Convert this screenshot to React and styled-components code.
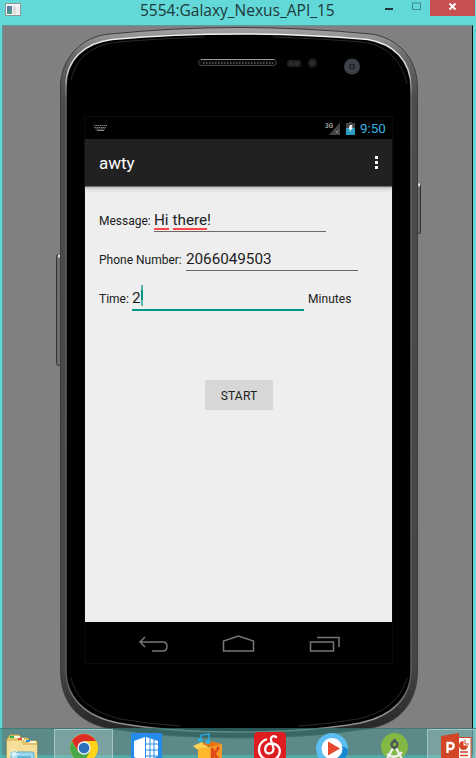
import React from 'react';
import styled, { createGlobalStyle } from 'styled-components';

const GlobalStyle = createGlobalStyle`
  * { box-sizing: border-box; }
  body { margin: 0; overflow: hidden; background: #63d8d8; }
`;

const Desktop = styled.div`
  position: relative;
  width: 476px;
  height: 758px;
  overflow: hidden;
  display: flex;
  flex-direction: column;
  background: #63d8d8;
  font-family: Roboto, "Open Sans", sans-serif;
`;

const TitleBar = styled.header`
  height: 25px;
  flex: none;
  display: grid;
  grid-template-columns: 140px 1fr 142px;
`;

const AppIcon = styled.svg`
  display: block;
  margin: 3px 0 0 5px;
`;

const WindowTitle = styled.h1`
  margin: 0;
  font: 400 15.5px/21px "Open Sans", sans-serif;
  color: #1d3838;
  white-space: nowrap;
`;

const WindowControls = styled.div`
  display: flex;
  justify-content: flex-end;
  padding-right: 2px;
`;

const ControlButton = styled.button`
  width: ${(p) => p.$width}px;
  height: 16px;
  padding: 0;
  border: 0;
  background: ${(p) => (p.$danger ? '#c75050' : 'transparent')};
  svg { display: block; }
`;

const EmulatorStage = styled.main`
  position: relative;
  flex: 1;
  margin: 0 3px 0 2px;
  padding: 91px 0 0 82px;
  background: #808080;
  border: 1px solid #5f9b9b;
  border-right-color: #101010;
  border-bottom: 0;
`;

const PhoneArt = styled.svg`
  position: absolute;
  left: -3px;
  top: -26px;
  pointer-events: none;
`;

const Screen = styled.section`
  position: relative;
  width: 307px;
  height: 546px;
  display: grid;
  grid-template-rows: 22px 47px 1fr 41px;
  background: #000;
  outline: 1px solid #0b0b0b;
`;

const StatusBar = styled.div`
  display: flex;
  align-items: center;
  padding: 0 6px 0 9px;
  background: #000;
  svg { display: block; flex: none; }
`;

const StatusRight = styled.div`
  margin-left: auto;
  display: flex;
  align-items: center;
  gap: 5px;
`;

const Clock = styled.time`
  width: 26px;
  font-size: 13.4px;
  line-height: 22px;
  padding-top: 1px;
  color: #33b5e5;
  white-space: nowrap;
`;

const ActionBar = styled.div`
  position: relative;
  z-index: 1;
  display: flex;
  align-items: center;
  justify-content: space-between;
  padding: 0 14px 0 14px;
  background: #212121;
  box-shadow: 0 1px 0 #777074, 0 2px 0 #c3bdc0, 0 3px 4px rgba(80, 55, 65, 0.25);
`;

const AppName = styled.h2`
  margin: 1px 0 0;
  font-size: 17px;
  line-height: 22px;
  font-weight: 400;
  color: #fff;
`;

const Overflow = styled.button`
  display: grid;
  gap: 2px;
  padding: 0;
  border: 0;
  background: none;
`;

const OverflowDot = styled.span`
  width: 3px;
  height: 3px;
  background: #fff;
`;

const Content = styled.form`
  background: #eee;
  padding: 21px 14px 0;
  display: flex;
  flex-direction: column;
`;

const FieldRow = styled.div`
  display: flex;
  align-items: flex-start;
  height: 39px;
`;

const Label = styled.label`
  width: ${(p) => p.$width}px;
  flex: none;
  padding-top: 6px;
  font-size: 12px;
  line-height: 16px;
  color: #202020;
  white-space: nowrap;
`;

const Unit = styled(Label).attrs({ as: 'span' })`
  padding-left: 4px;
  letter-spacing: 0.05px;
`;

const Field = styled.div`
  width: 172px;
  height: ${(p) => (p.$focused ? 26 : 25)}px;
  display: flex;
  align-items: flex-start;
  border-bottom: ${(p) => (p.$focused ? '2px solid #009688' : '1px solid #6c686a')};
  font-size: 15.3px;
  line-height: 26px;
  letter-spacing: -0.05px;
  color: #1c1c1c;
`;

const Misspelled = styled.span`
  height: 23px;
  margin-right: ${(p) => p.$gap || 0}px;
  border-bottom: 2px solid #ff4444;
`;

const Caret = styled.span`
  width: 2px;
  height: 21px;
  background: linear-gradient(#55b5ac 5px, #009688 5px 15px, #55b5ac 15px);
`;

const StartButton = styled.button`
  align-self: flex-start;
  width: 68px;
  height: 30px;
  margin: 56px 0 0 106px;
  padding: 1px 0 0;
  border: 0;
  border-radius: 1px;
  background: #d7d7d7;
  font: 400 12px/20px Roboto, sans-serif;
  letter-spacing: 0.2px;
  color: #202020;
`;

const NavBar = styled.nav`
  display: flex;
  background: #000;
  svg { display: block; }
`;

const Taskbar = styled.footer`
  position: absolute;
  left: 0;
  right: 0;
  bottom: 0;
  height: 30px;
  display: grid;
  grid-template-columns: 54px 59px 66px 60px 62px 62px 64px 49px;
  background: linear-gradient(transparent 27px, rgba(74, 190, 190, 0.6) 27px), rgba(67, 144, 141, 0.62);
  box-shadow: inset 0 1px 0 rgba(20, 90, 90, 0.35);
`;

const Task = styled.div`
  overflow: hidden;
  padding: ${(p) => p.$pad};
  border: ${(p) => (p.$open ? '1px solid #a6c6c5' : '0')};
  border-bottom: 0;
  margin-top: ${(p) => (p.$open ? 1 : 0)}px;
  background: ${(p) => (p.$open ? 'rgba(190,215,214,.3)' : 'transparent')};
  svg { display: block; overflow: visible; }
`;

const OUTER =
  'M60.5 86C61 58 82 36 110 34Q175 27.500 239 27.500T371 34C398 38 417.500 58 417.500 88V670C417.500 700 402 724 366 729Q310 738 239 738T112 729C76 723 60.500 700 60.500 670Z';
const INNER =
  'M66 86C66 60 84 43 112 39.500Q175 34 239 34T368 39.500C394 44 411 61 411 88V670C411 697 393 716 360 723Q310 732 239 732T118 723C84 716 66 697 66 670Z';

function Phone() {
  return (
    <PhoneArt width="476" height="758" viewBox="0 0 476 758" fill="none">
      <defs>
        <linearGradient id="rim" x1="0" y1="27" x2="0" y2="739" gradientUnits="userSpaceOnUse">
          <stop offset="0" stopColor="#a6a6a6" />
          <stop offset=".04" stopColor="#6a6a6a" />
          <stop offset=".1" stopColor="#4c4c4c" />
          <stop offset=".9" stopColor="#454545" />
          <stop offset="1" stopColor="#222" />
        </linearGradient>
        <linearGradient id="shine" x1="0" y1="34" x2="0" y2="739" gradientUnits="userSpaceOnUse">
          <stop offset="0" stopColor="#f2f2f2" />
          <stop offset=".05" stopColor="#d0d0d0" />
          <stop offset=".09" stopColor="#666" />
          <stop offset=".92" stopColor="#5a5a5a" />
          <stop offset=".97" stopColor="#999" />
          <stop offset="1" stopColor="#777" />
        </linearGradient>
      </defs>
      <rect x="56.500" y="254.500" width="5" height="111" rx="2" fill="#6c6c6c" stroke="#333" />
      <path d="M58 256h3" stroke="#ddd" strokeWidth="3" />
      <rect x="415.500" y="184.500" width="5" height="49" rx="1.500" fill="#6a6a6a" stroke="#333" />
      <path d="M418 185h2" stroke="#ddd" strokeWidth="3" />
      <path d={OUTER} fill="url(#rim)" stroke="#3c3c3c" />
      <path d={INNER} fill="#000" stroke="url(#shine)" strokeWidth="1.500" />
      <path d="M71 80C76 58 91 46 114 42.500Q150 39 205 37M273 37Q330 39 366 42.500C388 47 401 60 407 84M71 678C76 700 93 712 120 719Q150 724 180 726M298 726Q330 724 358 719C387 712 401 698 407 678" stroke="#2a2a2a" />
      <rect x="198.500" y="59.500" width="78" height="6" rx="3" fill="#0c0c0c" stroke="#444" />
      <path d="M201 59.500h73" stroke="#999" />
      <path d="M203 63h70" stroke="#484848" strokeWidth="2" strokeDasharray="1.500 1.500" />
      <rect x="287" y="60" width="14" height="7" rx="3" fill="#202020" />
      <circle cx="291" cy="63.500" r="2" fill="#2c2c2c" />
      <circle cx="297" cy="63.500" r="2" fill="#2c2c2c" />
      <circle cx="312.500" cy="63" r="4.500" fill="#202020" />
      <circle cx="312.500" cy="63" r="2" fill="#303030" />
      <circle cx="352" cy="66.500" r="8" fill="#3b4047" />
      <circle cx="352" cy="66.500" r="5" stroke="#43494f" />
      <circle cx="352" cy="66.500" r="3" fill="#25292e" />
      <circle cx="352" cy="66.500" r="1.200" fill="#3c4249" />
    </PhoneArt>
  );
}

function Explorer() {
  return (
    <svg width="34" height="26" viewBox="0 0 34 26">
      <path d="M2 3l2-3h9l2 3h7l1 3h8v20H1V4z" fill="#dfc36c" stroke="#c8a64d" />
      <path d="M4 1h10v4h9v3h7V6H18V3H4z" fill="#fff8dc" />
      <path d="M1 6h14l2 4h14v17H1z" fill="#f5df98" />
      <path d="M4 2h4" stroke="#2bb24c" strokeWidth="2" />
      <path d="M12 4h4" stroke="#e0523f" strokeWidth="2" />
      <path d="M20 6h4" stroke="#2a8ee0" strokeWidth="2" />
      <rect x="5" y="17" width="23" height="11" rx="2" fill="#9ed8ee" stroke="#5ba8c8" />
      <path d="M8 14v10M3 19h10M5 16l6 6M11 16l-6 6" stroke="#e9fbff" />
      <path d="M11 21h14v6H11z" fill="#60b6d8" />
    </svg>
  );
}

function Chrome() {
  return (
    <svg width="28" height="28" viewBox="0 0 28 28">
      <circle cx="14" cy="14" r="14" fill="#ffd31a" />
      <path d="M1.900 7A14 14 0 0 1 26.100 7H14L8 17.500z" fill="#dd2e25" />
      <path d="M1.900 7A14 14 0 0 0 14 28l6-10.500H8z" fill="#48a94a" />
      <circle cx="14" cy="14" r="6.700" fill="#e9f1f5" />
      <circle cx="14" cy="14" r="5.300" fill="#2c70bd" />
    </svg>
  );
}

function Cube() {
  return (
    <svg width="31" height="26" viewBox="0 0 31 26">
      <rect width="31" height="30" rx="1" fill="#258ced" />
      <path d="M3 8l11-4v25L3 24z" fill="#fff" />
      <path d="M15 4l12 4v15l-12 6z" fill="#fff" />
      <path d="M14.500 4v26M19 5v22M23 6v20M15 11h13M15 17h13M15 23h12" stroke="#258ced" />
    </svg>
  );
}

function MusicBox() {
  return (
    <svg width="30" height="26" viewBox="0 0 30 26">
      <path d="M0 13l9-4 6 5-6 6z" fill="#ffd35a" />
      <path d="M9 11l8-3 12 3-8 4z" fill="#e87510" />
      <path d="M5 15l12-1v16H5z" fill="#ffb730" />
      <path d="M17 14l12-3v19H17z" fill="#f59a2a" />
      <path d="M19.500 15v12M26 14l-5 7 6 7" fill="none" stroke="#e04c18" strokeWidth="3" />
      <path d="M8 7V2l8-1v6" fill="none" stroke="#24aee5" strokeWidth="1.400" />
      <ellipse cx="7" cy="7" rx="2.500" ry="1.800" fill="#29b4ea" />
      <ellipse cx="15" cy="9" rx="2.600" ry="2" fill="#29b4ea" />
    </svg>
  );
}

function NetMusic() {
  return (
    <svg width="32" height="27" viewBox="0 0 32 27">
      <rect width="32" height="32" rx="4" fill="#dd1d20" />
      <path
        d="M12 7.500C3.500 11 3.500 21 8 25c5 4.500 13 4 16-.5 4-6 1-13-7-13-7 .5-7.500 9.500-2.500 10 5 0 5.500-4 4.500-7l-2-6.500c-.5-3.500 2.500-5 5-3"
        fill="none"
        stroke="#fff"
        strokeWidth="2.300"
        strokeLinecap="round"
      />
    </svg>
  );
}

function Player() {
  return (
    <svg width="32" height="26" viewBox="0 0 32 26">
      <circle cx="16" cy="16" r="16" fill="#5cbdf0" />
      <path d="M26 13l6 3q0 6-4 10h-9z" fill="#1689d3" />
      <circle cx="16" cy="15.500" r="10.500" fill="#fff" />
      <path d="M12 8.500v14l12-7z" fill="#e7482d" />
    </svg>
  );
}

function Studio() {
  return (
    <svg width="27" height="25" viewBox="0 0 27 25">
      <circle cx="13.500" cy="13.500" r="13.500" fill="#82b843" />
      <path d="M12 15L5 28M15 15l7 13M6 21c5 4 10 4 15-2" fill="none" stroke="#eee" strokeWidth="2.400" />
      <path d="M13.500 6v10" stroke="#505a55" strokeWidth="3" />
      <circle cx="13.500" cy="11.500" r="3" fill="#82b843" stroke="#505a55" strokeWidth="2.400" />
    </svg>
  );
}

function PowerPoint() {
  return (
    <svg width="31" height="25" viewBox="0 0 31 25">
      <rect x="15" y="4.500" width="15" height="25" fill="#fff" stroke="#d24625" />
      <path d="M0 3l18-3v30L0 27z" fill="#d24625" />
      <path d="M6.500 20V10h3.200a3 3 0 0 1 0 6H7" fill="none" stroke="#fff" strokeWidth="2.400" />
      <path d="M22.500 8a4.500 4.500 0 1 0 4.500 4.500h-4.500z" fill="#d24625" />
      <path d="M24 6.500v4.500h4" fill="none" stroke="#d24625" />
      <path d="M19 19h8M19 22.500h8" stroke="#d24625" strokeWidth="1.500" />
    </svg>
  );
}

export default function App() {
  return (
    <>
      <GlobalStyle />
      <Desktop>
        <TitleBar>
          <AppIcon width="16" height="14" viewBox="0 0 16 14">
            <rect x=".5" y=".5" width="15" height="12" fill="#f4f4f4" stroke="#8c9999" />
            <rect x="2" y="3" width="5" height="8" fill="#4c9a86" />
            <path d="M2 3h5v3l-5 3z" fill="#587f9f" />
            <path d="M8 3h3v8H8z" fill="#ddd" />
            <path d="M12 3h2v8h-2z" fill="#e8e8e8" />
          </AppIcon>
          <WindowTitle>5554:Galaxy_Nexus_API_15</WindowTitle>
          <WindowControls>
            <ControlButton $width={30} aria-label="Minimize">
              <svg width="30" height="16"><path d="M4 9h8" stroke="#1d3838" strokeWidth="2" /></svg>
            </ControlButton>
            <ControlButton $width={19} aria-label="Maximize">
              <svg width="19" height="16"><path d="M1.500 3v6.500h8V3M1 3h9" fill="none" stroke="#3f8c8c" /></svg>
            </ControlButton>
            <ControlButton $width={45} $danger aria-label="Close">
              <svg width="45" height="16"><path d="M19.500 3.500l6 6M25.500 3.500l-6 6" stroke="#fff" strokeWidth="1.800" /></svg>
            </ControlButton>
          </WindowControls>
        </TitleBar>
        <EmulatorStage>
          <Phone />
          <Screen>
            <StatusBar>
              <svg width="13" height="6" viewBox="0 0 13 6">
                <path d="M0 .5h13M.5 2.500h12M1.500 4h10" stroke="#8a8a8a" strokeDasharray="1.400 .6" />
                <path d="M3 5.500h7" stroke="#888" />
              </svg>
              <StatusRight>
                <svg width="16" height="15" viewBox="0 0 16 15">
                  <path d="M15 1.500V14H4z" fill="#444" />
                  <path d="M10.500 9.500l3 3M13.500 9.500l-3 3" stroke="#888" strokeWidth=".8" />
                  <text x="0" y="7" fontSize="6.500" fontWeight="700" fontFamily="Roboto" fill="#999">3G</text>
                </svg>
                <svg width="9" height="13" viewBox="0 0 9 13">
                  <path d="M3 0h3v1h3v12H0V1h3z" fill="#444" />
                  <path d="M0 6h9v7H0z" fill="#2d9cc5" />
                  <path d="M4 3h2.500L5.500 5.500H7L3.500 10l.5-3H2.500z" fill="#fff" />
                </svg>
                <Clock>9:50</Clock>
              </StatusRight>
            </StatusBar>
            <ActionBar>
              <AppName>awty</AppName>
              <Overflow type="button" aria-label="More options">
                <OverflowDot /><OverflowDot /><OverflowDot />
              </Overflow>
            </ActionBar>
            <Content>
              <FieldRow>
                <Label $width={55}>Message:</Label>
                <Field><Misspelled $gap={4}>Hi</Misspelled><Misspelled>there</Misspelled>!</Field>
              </FieldRow>
              <FieldRow>
                <Label $width={87}>Phone Number:</Label>
                <Field>2066049503</Field>
              </FieldRow>
              <FieldRow>
                <Label $width={33}>Time:</Label>
                <Field $focused>2<Caret /></Field>
                <Unit $width={50}>Minutes</Unit>
              </FieldRow>
              <StartButton type="button">START</StartButton>
            </Content>
            <NavBar>
              <svg width="307" height="41" viewBox="0 0 307 41" fill="none" stroke="#777" strokeWidth="1.500">
                <path d="M60 15l-5 5 5 5M56 20h22q4 0 4 4.500t-4 4.500H67" />
                <path d="M138.500 29V19L153.500 14l15 5v10z" />
                <path d="M225.500 20h23v9h-23zM232 15.500h22V25" />
              </svg>
            </NavBar>
          </Screen>
        </EmulatorStage>
        <Taskbar>
          <Task $pad="7px 0 0 6px"><Explorer /></Task>
          <Task $open $pad="4px 0 0 15px"><Chrome /></Task>
          <Task $pad="5px 0 0 18px"><Cube /></Task>
          <Task $pad="5px 0 0 14px"><MusicBox /></Task>
          <Task $pad="4px 0 0 15px"><NetMusic /></Task>
          <Task $pad="5px 0 0 15px"><Player /></Task>
          <Task $pad="5px 0 0 18px"><Studio /></Task>
          <Task $open $pad="3px 0 0 13px"><PowerPoint /></Task>
        </Taskbar>
      </Desktop>
    </>
  );
}
